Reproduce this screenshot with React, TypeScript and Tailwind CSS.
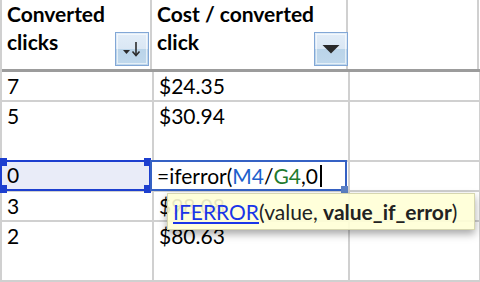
import React from "react"

const font = { fontFamily: "Lato, 'Open Sans', sans-serif" }

function FilterButton({ sorted }: { sorted?: boolean }) {
  return (
    <div className="mb-[3px] mr-[1px] h-[34px] w-[34px] shrink-0 border border-[#82a7d6] bg-[linear-gradient(#e2edf8_0%,#dae7f4_50%,#bad4e9_50%,#c0d8ec_100%)] p-[1px]">
      <div className="flex h-full w-full items-center justify-center border border-white/60">
        {sorted ? (
          <svg width="22" height="18" viewBox="0 0 22 18">
            <path d="M2 10 L9 10 L5.5 14 Z" fill="#2b2b2b" />
            <path d="M15 2 L15 15" stroke="#2b2b2b" strokeWidth="1.6" />
            <path d="M11.5 11.5 L15 15.5 L18.5 11.5" stroke="#2b2b2b" strokeWidth="1.6" fill="none" />
          </svg>
        ) : (
          <svg width="20" height="12" viewBox="0 0 20 12">
            <path d="M1.5 2 L18.5 2 L10 10.5 Z" fill="#2a2a2a" />
          </svg>
        )}
      </div>
    </div>
  )
}

function Row({ a, b, h }: { a: string; b: string; h: string }) {
  return (
    <div className={`flex border-b-2 border-[#d0d0d0] ${h}`}>
      <div className="w-[152px] shrink-0 border-r-2 border-[#d0d0d0] pl-[5px]">{a}</div>
      <div className="w-[196px] shrink-0 border-r-2 border-[#d0d0d0] pl-[5px]">{b}</div>
      <div className="w-[131px] shrink-0 border-r-2 border-[#d0d0d0]" />
      <div className="flex-1" />
    </div>
  )
}

export default function App() {
  return (
    <div
      className="relative h-[282px] w-[480px] overflow-hidden bg-white text-[21px] leading-[28px] text-black"
      style={font}
    >
      <div className="border-l-2 border-[#d0d0d0]">
        {/* header row */}
        <div className="flex h-[72px] border-b-[3px] border-[#9c9c9c]">
          <div className="flex w-[150px] shrink-0 items-end justify-between border-r-2 border-[#d0d0d0] pl-[5px]">
            <div className="self-start whitespace-nowrap font-bold">
              Converted
              <br />
              clicks
            </div>
            <FilterButton sorted />
          </div>
          <div className="flex w-[196px] shrink-0 items-end justify-between border-r-2 border-[#d0d0d0] pl-[5px]">
            <div className="self-start whitespace-nowrap font-bold">
              Cost / converted
              <br />
              click
            </div>
            <FilterButton />
          </div>
          <div className="w-[131px] shrink-0 border-r-2 border-[#d0d0d0]" />
          <div className="flex-1" />
        </div>

        <Row a="7" b="$24.35" h="h-[30px]" />
        <Row a="5" b="$30.94" h="h-[60px]" />
        <Row a="0" b="" h="h-[30px]" />
        <Row a="3" b="$98.08" h="h-[30px]" />
        <Row a="2" b="$80.63" h="h-[60px]" />
      </div>

      {/* selected cell */}
      <div className="absolute left-0 top-[160px] h-[31px] w-[151px] border-2 border-[#1d3fcf] bg-[#e9ecf8] pl-[5px] leading-[26px]">
        0
      </div>
      <div className="absolute left-0 top-[158px] h-[8px] w-[7px] bg-[#1d3fcf]" />
      <div className="absolute left-0 top-[185px] h-[8px] w-[7px] bg-[#1d3fcf]" />
      <div className="absolute left-[144px] top-[158px] h-[8px] w-[7px] bg-[#1d3fcf]" />
      <div className="absolute left-[144px] top-[185px] h-[8px] w-[7px] bg-[#1d3fcf]" />

      {/* in-cell editor */}
      <div className="absolute left-[150px] top-[160px] flex h-[31px] w-[197px] items-center border-2 border-[#3561c4] bg-white pl-[5px]">
        <span>=iferror(</span>
        <span className="text-[#1d5fcc]">M4</span>
        <span>/</span>
        <span className="text-[#1f7a2e]">G4</span>
        <span>,0</span>
        <span className="ml-[2px] h-[22px] w-[2px] bg-black" />
      </div>
      <div className="absolute left-[341px] top-[186px] h-[7px] w-[7px] bg-[#5b80c4]" />

      {/* function tooltip */}
      <div className="absolute left-[167px] top-[193px] flex h-[37px] w-[308px] items-center whitespace-nowrap border border-[#d6d6b0] bg-[#ffffd6]/90 pl-[5px] text-[21px] shadow-[0_4px_8px_rgba(0,0,0,0.35)]">
        <span className="text-[#1a35e8] underline">IFERROR</span>
        <span className="text-[#222]">(value,&nbsp;</span>
        <span className="font-bold text-[#222]">value_if_error</span>
        <span className="text-[#222]">)</span>
      </div>
    </div>
  )
}
